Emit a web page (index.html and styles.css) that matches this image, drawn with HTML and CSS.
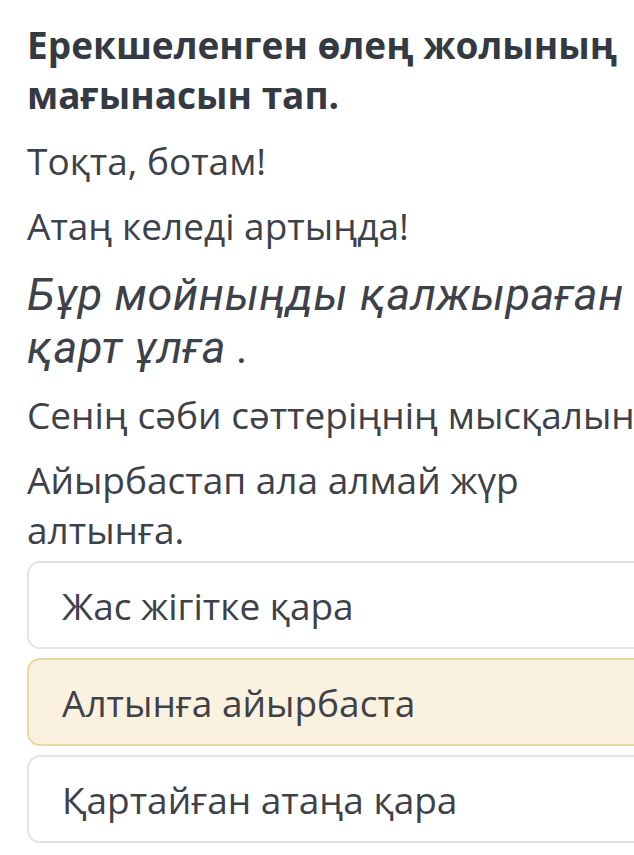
FILE: index.html
```html
<!DOCTYPE html>
<html lang="kk">
<head>
<meta charset="utf-8">
<link rel="stylesheet" href="styles.css">
</head>
<body>
<div class="page">
  <h1 class="title">Ерекшеленген өлең жолының мағынасын тап.</h1>
  <p class="line l1">Тоқта, ботам!</p>
  <p class="line l2">Атаң келеді артыңда!</p>
  <p class="em">Бұр мойныңды қалжыраған қарт ұлға .</p>
  <p class="line l3 nowrap">Сенің сәби сәттеріңнің мысқалын</p>
  <p class="line l4">Айырбастап ала алмай жүр алтынға.</p>
  <div class="options">
    <div class="opt">Жас жігітке қара</div>
    <div class="opt sel">Алтынға айырбаста</div>
    <div class="opt">Қартайған атаңа қара</div>
  </div>
</div>
</body>
</html>
```

FILE: styles.css
```css
html, body {
  margin: 0;
  padding: 0;
  background: #ffffff;
  overflow: hidden;
}
.page {
  width: 640px;
  padding: 20px 0 0 27px;
  font-family: "Open Sans", "Noto Sans", sans-serif;
  color: #3d4149;
}
.title {
  margin: 0;
  font-size: 37px;
  line-height: 50px;
  font-weight: 700;
  color: #343a44;
  width: 620px;
}
.line {
  margin: 0;
  font-size: 37px;
  line-height: 52px;
}
.nowrap { white-space: nowrap; }
.l1 { margin-top: 15px; }
.l2 { margin-top: 13px; }
.em {
  margin: 16px 0 0;
  font-family: Roboto, "Noto Sans", sans-serif;
  font-style: italic;
  font-size: 45px;
  letter-spacing: 0.6px;
  line-height: 53px;
  color: #3d4149;
}
.l3 { margin-top: 15px; }
.l4 { margin-top: 14px; width: 600px; line-height: 50px; }
.options {
  margin-top: 6px;
  display: flex;
  flex-direction: column;
  gap: 9px;
}
.opt {
  height: 84px;
  display: flex;
  align-items: center;
  padding-left: 33px;
  border: 2px solid #e3e4e6;
  border-radius: 13px;
  font-size: 37px;
  color: #3d4149;
  background: #fff;
}
.opt.sel {
  background: #faf1de;
  border-color: #ead7a3;
}
```
